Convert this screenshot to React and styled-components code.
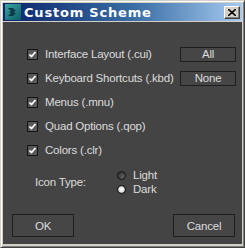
import styled, { createGlobalStyle } from 'styled-components';

const GlobalStyle = createGlobalStyle`
  html, body {
    margin: 0;
    padding: 0;
    background: #d4d0c8;
  }
`;

const Window = styled.div`
  width: 245px;
  height: 248px;
  box-sizing: border-box;
  display: flex;
  flex-direction: column;
  background: #d4d0c8;
  border-top: 1px solid #d4d0c8;
  border-left: 1px solid #d4d0c8;
  border-right: 1px solid #404040;
  border-bottom: 1px solid #404040;
  box-shadow: inset 1px 1px 0 #ffffff, inset -1px -1px 0 #808080;
  padding: 2px 2px 3px 2px;
  font-family: "Liberation Sans", Arial, sans-serif;
`;

const TitleBar = styled.div`
  height: 18px;
  flex-shrink: 0;
  display: flex;
  align-items: center;
  padding: 0 2px 0 2px;
  background: linear-gradient(to right, #0a246a 0%, #3a6ea5 55%, #a6caf0 100%);
`;

const TitleText = styled.span`
  flex: 1;
  margin-left: 3px;
  color: #ffffff;
  font-family: "DejaVu Sans", Verdana, sans-serif;
  font-weight: bold;
  font-size: 13px;
  letter-spacing: 0.8px;
  white-space: nowrap;
`;

const CloseButton = styled.div`
  width: 16px;
  height: 13px;
  box-sizing: border-box;
  background: #d4d0c8;
  border-top: 1px solid #ffffff;
  border-left: 1px solid #ffffff;
  border-right: 1px solid #404040;
  border-bottom: 1px solid #404040;
  box-shadow: inset -1px -1px 0 #808080;
  display: flex;
  align-items: center;
  justify-content: center;
`;

const Content = styled.div`
  flex: 1;
  margin-top: 1px;
  background: #444444;
  display: flex;
  flex-direction: column;
  padding: 20px 6px 7px 9px;
  color: #dcdcdc;
  font-size: 11.5px;
  letter-spacing: -0.2px;
`;

const CheckList = styled.div`
  display: flex;
  flex-direction: column;
  padding-left: 15px;
`;

const Row = styled.div`
  height: 24px;
  display: flex;
  align-items: center;
`;

const Label = styled.label`
  flex: 1;
  display: flex;
  align-items: center;
  gap: 7px;
  white-space: nowrap;
`;

const Box = styled.span`
  width: 11px;
  height: 11px;
  box-sizing: border-box;
  border: 1px solid #161616;
  background: #585858;
  display: flex;
  align-items: center;
  justify-content: center;
`;

const SmallButton = styled.div`
  width: 56px;
  height: 15px;
  box-sizing: border-box;
  border: 1px solid #1e1e1e;
  background: #464646;
  display: flex;
  align-items: center;
  justify-content: center;
`;

const IconTypeRow = styled.div`
  display: flex;
  align-items: center;
  margin-top: 6px;
  padding-left: 23px;
`;

const IconTypeLabel = styled.span`
  width: 82px;
`;

const RadioGroup = styled.div`
  display: flex;
  flex-direction: column;
`;

const RadioRow = styled.label`
  height: 14px;
  display: flex;
  align-items: center;
  gap: 7px;
`;

const Radio = styled.span`
  width: 9px;
  height: 9px;
  border-radius: 50%;
  box-sizing: border-box;
  border: 1px solid #141414;
  background: ${p => p.$on
    ? 'radial-gradient(circle at 50% 50%, #ffffff 0%, #e6e6e6 50%, #8a8a8a 80%, #2a2a2a 100%)'
    : 'radial-gradient(circle at 70% 70%, #626262 0%, #444444 50%, #222222 100%)'};
`;

const Footer = styled.div`
  margin-top: auto;
  display: flex;
  justify-content: space-between;
  padding-right: 1px;
`;

const DialogButton = styled.div`
  width: 62px;
  height: 23px;
  box-sizing: border-box;
  border: 1px solid #1e1e1e;
  background: #464646;
  display: flex;
  align-items: center;
  justify-content: center;
`;

const Check = () => (
  <svg width="9" height="9" viewBox="0 0 9 9">
    <path d="M1.5 4.5 L3.5 6.5 L7.5 2" stroke="#ffffff" strokeWidth="1.8" fill="none" />
  </svg>
);

const MaxIcon = () => (
  <svg width="16" height="16" viewBox="0 0 16 16">
    <defs>
      <linearGradient id="mx" x1="0" y1="0" x2="1" y2="1">
        <stop offset="0" stopColor="#3aa6a6" />
        <stop offset="1" stopColor="#0c5c66" />
      </linearGradient>
    </defs>
    <rect width="16" height="16" fill="url(#mx)" />
    <path d="M3 4 L8 4 L11 7 L8 8 L11 9 L8 12 L3 12 L6 9 L4 8 L6 7 Z" fill="#0d3a44" />
  </svg>
);

const options = [
  { label: 'Interface Layout (.cui)', button: 'All' },
  { label: 'Keyboard Shortcuts (.kbd)', button: 'None' },
  { label: 'Menus (.mnu)' },
  { label: 'Quad Options (.qop)' },
  { label: 'Colors (.clr)' },
];

export default function App() {
  return (
    <>
      <GlobalStyle />
      <Window>
        <TitleBar>
          <MaxIcon />
          <TitleText>Custom Scheme</TitleText>
          <CloseButton>
            <svg width="8" height="7" viewBox="0 0 8 7">
              <path d="M0 0 L8 7 M8 0 L0 7" stroke="#000" strokeWidth="1.6" />
            </svg>
          </CloseButton>
        </TitleBar>
        <Content>
          <CheckList>
            {options.map(o => (
              <Row key={o.label}>
                <Label>
                  <Box><Check /></Box>
                  {o.label}
                </Label>
                {o.button && <SmallButton>{o.button}</SmallButton>}
              </Row>
            ))}
          </CheckList>
          <IconTypeRow>
            <IconTypeLabel>Icon Type:</IconTypeLabel>
            <RadioGroup>
              <RadioRow><Radio />Light</RadioRow>
              <RadioRow><Radio $on />Dark</RadioRow>
            </RadioGroup>
          </IconTypeRow>
          <Footer>
            <DialogButton>OK</DialogButton>
            <DialogButton>Cancel</DialogButton>
          </Footer>
        </Content>
      </Window>
    </>
  );
}
